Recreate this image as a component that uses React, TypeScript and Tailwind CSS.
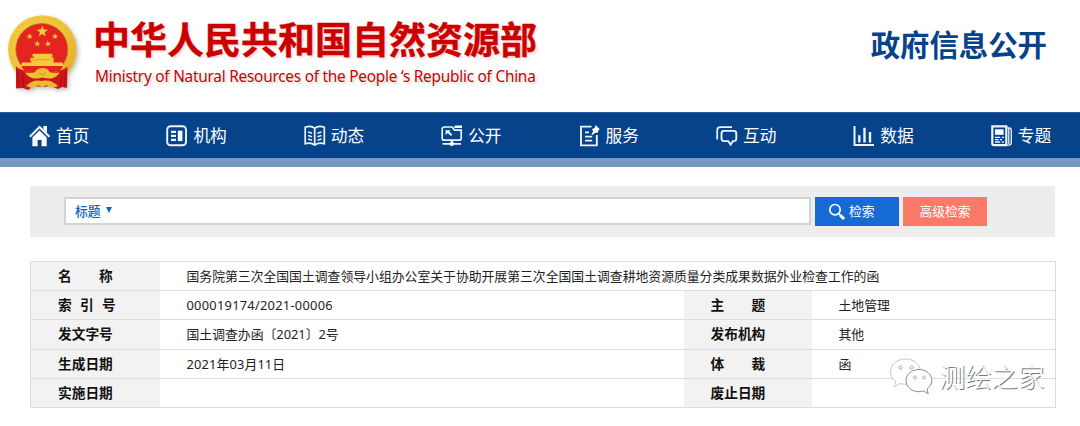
import type { ReactNode } from "react"

const FONT = "font-['Noto_Sans','Noto_Sans_CJK_SC',sans-serif]"

// ── Iconos del menú ───────────────────────────────────────────────────────────

function NavIcon({ children }: { children: ReactNode }) {
  return (
    <svg
      viewBox="0 0 22 22"
      className="w-[22px] h-[22px] shrink-0"
      fill="none"
      stroke="#eef4fb"
      strokeWidth="1.9"
    >
      {children}
    </svg>
  )
}

const NAV: { label: string; icon: ReactNode }[] = [
  {
    label: "首页",
    icon: (
      <>
        <path d="M3.4 12.4 10.5 5.4 17.7 12.4V21.2H12.6V15H8.6V21.2H3.4Z" fill="#fff" stroke="none" />
        <path d="M.8 11.7 10.5 2 20.4 11.7" strokeWidth="2.1" />
        <path d="M14.4 1h3.600v7l-3.600-3.600Z" fill="#fff" stroke="none" />
      </>
    ),
  },
  {
    label: "机构",
    icon: (
      <>
        <rect x="1.2" y="1.3" width="18.8" height="19" rx="3.4" />
        <path d="M5 6.8h5M5 10.8h5M5 14.9h5" strokeWidth="2.2" />
        <path d="M11.8 5.7h4.6v10.4h-4.6Z" fill="#fff" stroke="none" />
      </>
    ),
  },
  {
    label: "动态",
    icon: (
      <>
        <path d="M10.7 3.4C8.2 1 4.2 1.1 1.2 2.2v16.6c3.2-.9 6.9-.8 9.5 1.3 2.7-2.1 6.4-2.2 9.6-1.3V2.2c-3-1.1-7.1-1.2-9.6 1.2Z" strokeWidth="1.7" />
        <path d="M10.7 3.4v16.7" strokeWidth="1.7" />
        <path d="m4 7 4 1.2M4 10.5l4 1.2M4 14l4 1.2M17.5 7l-4 1.2m4 2.3-4 1.2m4 2.3-4 1.2" strokeWidth="1.5" />
      </>
    ),
  },
  {
    label: "公开",
    icon: (
      <>
        <path d="M11 2H3.2a2 2 0 0 0-2 2v9.2a2 2 0 0 0 2 2h15a2 2 0 0 0 2-2V5.2h-6.7L11.2 2Z" strokeWidth="1.7" />
        <path d="m13 2.2 1-1.6h7V3h-7.3Z" fill="#fff" stroke="none" />
        <path d="M4.6 5.2h4.900L8.3 6.5l3 3-1.5 1.500-3-3-2.200 1.900Z" fill="#fff" stroke="none" />
        <path d="M10.8 15v3M1.6 18.8H20" strokeWidth="1.7" />
        <circle cx="10.8" cy="18.8" r="2.2" fill="#fff" stroke="none" />
      </>
    ),
  },
  {
    label: "服务",
    icon: (
      <>
        <path d="M12.5 1.6H2v18.8h15.8V10" />
        <path d="M6 7.3h4M6 11.6h7.2M6 15.6h7.2" strokeWidth="1.8" />
        <path d="m16.6 0 4.3 4.2-1.4.9-.8 2.900-1.900-.5-3.400 2.600-1-1 1.900-2.900-1.500-1.600 3.100-2.200Z" fill="#fff" stroke="none" />
      </>
    ),
  },
  {
    label: "互动",
    icon: (
      <>
        <path d="M1.2 14.4V5.2a3 3 0 0 1 3-3H16" strokeWidth="1.7" />
        <path d="M8 5.9h9.8a2.5 2.5 0 0 1 2.5 2.5v5.2a2.5 2.5 0 0 1-2.5 2.5h-.9l-2.200 3.500-2.500-3.500H8a2.5 2.5 0 0 1-2.5-2.5V8.4A2.5 2.5 0 0 1 8 5.9Z" />
      </>
    ),
  },
  {
    label: "数据",
    icon: (
      <>
        <path d="M1.5 1v19H21" strokeWidth="2" />
        <path d="M6.3 10.2v7.3M11.5 2.7v14.8M17 7v10.5" strokeWidth="2.4" />
      </>
    ),
  },
  {
    label: "专题",
    icon: (
      <>
        <path d="M1.3 1.4h14v18.7H2.900a1.600 1.600 0 0 1-1.600-1.600Z" strokeWidth="2.2" />
        <path d="M15.8 2.8h2.400a2.400 2.400 0 0 1 2.100 2.400v12.400a2.600 2.600 0 0 1-2.600 2.600h-3.200M17.8 3.5V19" strokeWidth="1.3" />
        <path d="M4 4.3h8.6v5.5H4Z" fill="#fff" stroke="none" />
        <path d="M4 12.4h5.2M10.8 12.4h2M4 14.7h3.7M9 14.7h2M4 17h5.2M10.8 17h2" strokeWidth="1.3" />
      </>
    ),
  },
]

// ── Emblema nacional ──────────────────────────────────────────────────────────

const STAR = "M0-5 1.2-1.6 4.8-1.55 1.95.65 2.95 4.05 0 2 -2.95 4.05 -1.95.65 -4.8-1.55 -1.2-1.6Z"

function Emblem() {
  return (
    <svg viewBox="0 0 76 80" className="w-[76px] h-[80px] shrink-0 drop-shadow-[2px_2px_2px_rgba(0,0,0,0.25)]">
      <defs>
        <linearGradient id="gold" x1="0" y1="0" x2="1" y2="1">
          <stop offset="0" stopColor="#f3cb48" />
          <stop offset="0.5" stopColor="#f0c23a" />
          <stop offset="1" stopColor="#e3ab29" />
        </linearGradient>
      </defs>
      <circle cx="35.3" cy="34.5" r="34.3" fill="url(#gold)" />
      <circle cx="35.3" cy="34.5" r="31.5" fill="none" stroke="#dfae30" strokeWidth="1" strokeDasharray="1.5 3" />
      <circle cx="34.8" cy="34.5" r="26" fill="#e4241e" stroke="#b97c17" strokeWidth="0.8" />
      <g fill="#f6ca3c">
        <path d={STAR} transform="translate(35.3 16.5) scale(1.2)" />
        <path d={STAR} transform="translate(22.7 21.5) scale(.65) rotate(-10)" />
        <path d={STAR} transform="translate(48 21.5) scale(.65) rotate(10)" />
        <path d={STAR} transform="translate(30.3 28.8) scale(.65) rotate(8)" />
        <path d={STAR} transform="translate(41 28.8) scale(.65) rotate(-8)" />
        <path d="M26 38.8h19l1 2.800H25ZM27 41.600h17.500v3H27ZM23.500 42.800h23.200v3.600H23.500ZM24.500 46.400H46.200v1.200H55.500L56.500 51H14L15 47.600h9.500Z" />
      </g>
      <path d="M24.5 44.8h21" stroke="#dc6a28" strokeWidth="0.5" />
      <path d="M9 51.5C16 57.5 24 56 35 60c11-4 19-2.500 25.500-8.500L60 73l-5-1-4 2-8-3-8 1-8-1-6 4-5-2-7 .5Z" fill="#cf1719" />
      <path d="M10.5 55 12 71.500M15.5 59l1 13M55 58l-1.500 13M59 56l-1.500 15" stroke="#a90f12" strokeWidth="1.2" />
      <path d="M14.5 51h41.500c-1 2.500-2.500 4.500-4 5.500-6-1.500-9-2-16.700 2-7.700-4-10.700-3.500-16.800-2-1.500-1-3-3-4-5.500Z" fill="#e4241e" />
      <path d="M18 57.500c6 .5 8 .5 10-.5 2-3 4-4 7.500-4s5.500 1 7 4c3 1 6 1 10 .5-3 5.500-9 7.500-17 5-7 2.500-14 .5-17.500-5Z" fill="#f0c034" />
      <path d="M19 71c5.500-5 10.500-6.500 16-5 6.500-1.500 11.500.5 16 5l-5.500 2-6-2.800-4.500 2-4-2-6.500 2.800Z" fill="#edba2f" />
      <path d="M31.5 57.500c1.500 2.500 6 2.500 7.500 0" fill="none" stroke="#d1941e" strokeWidth="1" />
    </svg>
  )
}

// ── Tabla de datos ────────────────────────────────────────────────────────────

type Campo = { label: string; value: string }

const FILAS: [Campo, Campo?][] = [
  [{ label: "名　　称", value: "国务院第三次全国国土调查领导小组办公室关于协助开展第三次全国国土调查耕地资源质量分类成果数据外业检查工作的函" }],
  [{ label: "索  引  号", value: "000019174/2021-00006" }, { label: "主　　题", value: "土地管理" }],
  [{ label: "发文字号", value: "国土调查办函〔2021〕2号" }, { label: "发布机构", value: "其他" }],
  [{ label: "生成日期", value: "2021年03月11日" }, { label: "体　　裁", value: "函" }],
  [{ label: "实施日期", value: "" }, { label: "废止日期", value: "" }],
]

function Etiqueta({ children }: { children: string }) {
  const spacing = children.includes("  ") ? "[word-spacing:0.6px]" : ""
  return (
    <th className={`bg-[#f2f2f2] p-0 pl-[27px] text-left text-[13.7px] leading-5 font-bold text-[#111] whitespace-pre ${spacing}`}>
      {children}
    </th>
  )
}

function Valor({ children, colSpan }: { children: string; colSpan?: number }) {
  // los valores que empiezan con cifras llevan un poco más de espacio
  const spacing = /^0/.test(children) ? "tracking-[0.27px]" : /^2/.test(children) ? "tracking-[0.15px]" : ""
  return (
    <td colSpan={colSpan} className={`p-0 pl-[27px] text-[12.83px] leading-5 text-[#222] whitespace-nowrap ${spacing}`}>
      {children}
    </td>
  )
}

function Marca() {
  return (
    <div className="absolute left-[889px] top-[357px] flex items-center">
      <svg viewBox="0 0 46 40" className="w-[46px] h-[40px]" fill="#fff" strokeWidth="1">
        <path d="M16.5 2C8 2 1.5 7.5 1.5 14.5c0 4 2 7.400 5.200 9.600L5.400 30l5.600-3.400c2 .6 4.500.8 6.500.6 7.800-.5 14-6 14-12.700C31.5 7.5 25 2 16.5 2Z" stroke="#c9c9c9" />
        <path d="M30 12.500c-7.500 0-13 4.900-13 11 0 6.300 5.600 11.200 13 11.200 1.600 0 3.200-.3 4.600-.8l4.600 2.900-1.200-4.800c3-2 4.800-5 4.800-8.500 0-6.100-5.500-11-12.800-11Z" stroke="#8c8c8c" />
        <g fill="#f5f5f5" stroke="#b3b3b3">
          <circle cx="11.5" cy="10.5" r="1.7" />
          <circle cx="22.5" cy="10.5" r="1.7" />
          <circle cx="26" cy="20.5" r="1.5" />
          <circle cx="35" cy="20.5" r="1.5" />
        </g>
      </svg>
      <span className="ml-[4px] text-[26.3px] leading-[40px] font-light text-white [text-shadow:1px_1px_0_#777]">
        测绘之家
      </span>
    </div>
  )
}

export default function App() {
  return (
    <div lang="zh-CN" className={`relative h-[426px] w-[1080px] overflow-hidden bg-white ${FONT}`}>
      <header className="flex h-[112px] items-start justify-between pl-[7px] pr-[33px]">
        <div className="flex pt-[15px]">
          <Emblem />
          <div className="-mt-[1px] ml-[10px] whitespace-nowrap text-[#cb0000]">
            <h1 className="text-[37px] leading-[52px] font-bold [-webkit-text-stroke:0.4px_#cb0000] [text-shadow:2px_2px_2px_rgba(203,0,0,0.15)]">
              中华人民共和国自然资源部
            </h1>
            <p className="mt-[1px] ml-[2px] text-[15.4px] leading-5 tracking-[-0.25px] [text-shadow:2px_2px_2px_rgba(0,0,0,0.15)]">
              Ministry of Natural Resources of the People ‘s Republic of China
            </p>
          </div>
        </div>
        <div className="mt-[25px] text-[29.4px] leading-10 font-bold text-[#06438a]">政府信息公开</div>
      </header>

      <nav className="flex h-[55px] border-t border-b-[9px] border-t-[#2a5e9a] border-b-[#7699c1] bg-[#06438a] pl-[29px]">
        {NAV.map((n) => (
          <a key={n.label} className="flex w-[137.4px] shrink-0 items-center text-[16.7px] text-white">
            <NavIcon>{n.icon}</NavIcon>
            <span className="ml-[5px] mt-[1px] leading-6">{n.label}</span>
          </a>
        ))}
      </nav>

      <div className="ml-[30px] mt-[19px] flex h-[51px] w-[1025px] items-start bg-[#ededed] pl-[34px] pt-[11px]">
        <div className="flex h-[28px] w-[747px] items-center border-2 border-[#d3d3d3] bg-white pt-[1px] pl-[9px] text-[12.8px] font-medium text-[#0a69bc]">
          标题
          <svg viewBox="0 0 6 6" className="ml-[5px] mb-[3px] h-[6px] w-[6px]">
            <path d="M0 0h6L3 6Z" fill="#0a69bc" />
          </svg>
        </div>
        <button className="ml-[4px] flex h-[29px] w-[84px] items-center bg-[#156ad6] pl-[13px] text-[12.8px] text-white">
          <svg viewBox="0 0 18 18" className="h-[18px] w-[18px]" fill="none" stroke="#fff">
            <circle cx="7" cy="6.7" r="5.2" strokeWidth="1.7" />
            <path d="m10.8 10.7 1.5 1.5" strokeWidth="1.5" />
            <path d="m12 12 4 4" strokeWidth="3" />
          </svg>
          <span className="ml-[3px] mt-[1px]">检索</span>
        </button>
        <button className="ml-[4px] h-[29px] w-[84px] bg-[#fc7968] pt-[1px] text-[12.8px] text-white">高级检索</button>
      </div>

      <table className="ml-[30px] mt-[24px] w-[1026px] table-fixed border-collapse border border-[#dcdcdc]">
        <colgroup>
          <col className="w-[129px]" />
          <col className="w-[524px]" />
          <col className="w-[128px]" />
          <col />
        </colgroup>
        <tbody>
          {FILAS.map(([a, b]) => (
            <tr key={a.label} className="h-[29.2px] border-b border-[#dcdcdc]">
              <Etiqueta>{a.label}</Etiqueta>
              <Valor colSpan={b ? undefined : 3}>{a.value}</Valor>
              {b && <Etiqueta>{b.label}</Etiqueta>}
              {b && <Valor>{b.value}</Valor>}
            </tr>
          ))}
        </tbody>
      </table>

      <Marca />
    </div>
  )
}
